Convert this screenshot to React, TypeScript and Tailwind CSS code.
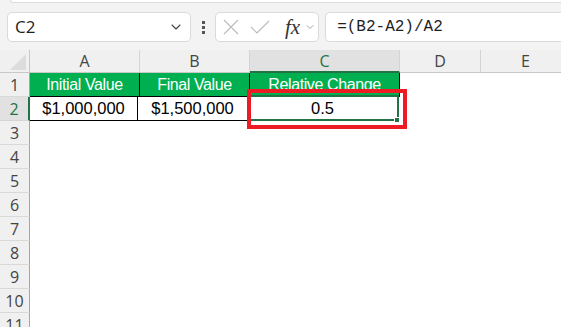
import { ChevronDown } from "lucide-react";

const cols = [
  { key: "A", w: "w-[110px]" },
  { key: "B", w: "w-[110px]" },
  { key: "C", w: "w-[150px]" },
  { key: "D", w: "w-[81px]" },
  { key: "E", w: "w-[90px]" },
];

const emptyRows = [3, 4, 5, 6, 7, 8, 9, 10, 11];

function RowHead({ n, active }: { n: number; active?: boolean }) {
  return (
    <div
      className={
        active
          ? "flex h-[24px] w-[30px] shrink-0 items-center justify-center border-b border-r-2 border-b-[#d4d4d4] border-r-[#217346] bg-[#e1e1e1] font-['Open_Sans',sans-serif] text-[16px] text-[#217346]"
          : "flex h-[24px] w-[30px] shrink-0 items-center justify-center border-b border-r border-b-[#d9d9d9] border-r-[#a6a6a6] bg-[#f0f0f0] font-['Open_Sans',sans-serif] text-[16px] text-[#444]"
      }
    >
      {n}
    </div>
  );
}

export default function App() {
  return (
    <div className="relative h-[327px] w-[561px] overflow-hidden bg-white font-['Liberation_Sans',sans-serif]">
      {/* toolbar */}
      <div className="h-[50px] bg-[#f3f3f3]">
        <div className="ml-[10px] h-[3px] rounded-bl-[4px] border-b border-l border-[#dcdcdc] bg-white" />
        <div className="flex items-center pl-[7px] pt-[9px]">
          <div className="flex h-[30px] w-[187px] items-center justify-between rounded-[5px] border border-[#dadada] bg-white pl-[7px] pr-[6px]">
            <span className="font-['Open_Sans',sans-serif] text-[17px] text-[#1f1f1f]">C2</span>
            <ChevronDown className="h-[16px] w-[16px] text-[#444]" strokeWidth={1.6} />
          </div>
          <div className="ml-[11px] flex flex-col gap-[2px]">
            <span className="h-[3px] w-[3px] bg-[#555]" />
            <span className="h-[3px] w-[3px] bg-[#555]" />
            <span className="h-[3px] w-[3px] bg-[#555]" />
          </div>
          <div className="ml-[10px] flex h-[30px] w-[106px] items-center rounded-[5px] border border-[#dadada] bg-white pl-[6px]">
            <svg width="18" height="18" viewBox="0 0 18 18" className="text-[#bdbdbd]">
              <path d="M2 2 L16 16 M16 2 L2 16" stroke="currentColor" strokeWidth="1.2" fill="none" />
            </svg>
            <svg width="20" height="18" viewBox="0 0 20 18" className="ml-[10px] text-[#bdbdbd]">
              <path d="M1 9 L7 15 L19 3" stroke="currentColor" strokeWidth="1.2" fill="none" />
            </svg>
            <span className="ml-[15px] font-['Liberation_Serif',serif] text-[21px] italic leading-none text-[#333]">fx</span>
            <ChevronDown className="ml-[4px] h-[12px] w-[12px] text-[#888]" strokeWidth={1.5} />
          </div>
          <div className="ml-[6px] flex h-[30px] w-[240px] items-center rounded-l-[5px] border border-r-0 border-[#dadada] bg-white pl-[11px]">
            <span className="font-['Liberation_Mono',monospace] text-[16px] text-[#1f1f1f]">=(B2-A2)/A2</span>
          </div>
        </div>
      </div>

      {/* column headers */}
      <div className="flex h-[23px] bg-[#f0f0f0] font-['Open_Sans',sans-serif]">
        <div className="relative w-[30px] shrink-0 border-b border-r border-[#c8c8c8]">
          <svg width="16" height="16" viewBox="0 0 16 16" className="absolute bottom-[2px] right-[3px]">
            <polygon points="16,0 16,16 0,16" fill="#dcdcdc" />
          </svg>
        </div>
        {cols.map((c) =>
          c.key === "C" ? (
            <div
              key={c.key}
              className={`${c.w} flex shrink-0 items-center justify-center border-b-2 border-r border-b-[#217346] border-r-[#d4d4d4] bg-[#e1e1e1] text-[16px] text-[#217346]`}
            >
              {c.key}
            </div>
          ) : (
            <div
              key={c.key}
              className={`${c.w} flex shrink-0 items-center justify-center border-b border-r border-b-[#c8c8c8] border-r-[#d4d4d4] text-[16px] text-[#444]`}
            >
              {c.key}
            </div>
          )
        )}
      </div>

      {/* row 1 */}
      <div className="flex">
        <RowHead n={1} />
        <div className="flex h-[24px] w-[110px] shrink-0 items-center justify-center border-b border-r border-black bg-[#00b050] text-[16px] tracking-[-0.4px] text-white">
          Initial Value
        </div>
        <div className="flex h-[24px] w-[110px] shrink-0 items-center justify-center border-b border-r border-black bg-[#00b050] text-[16px] tracking-[-0.4px] text-white">
          Final Value
        </div>
        <div className="flex h-[24px] w-[150px] shrink-0 items-center justify-center border-b border-r border-black bg-[#00b050] text-[16px] tracking-[-0.4px] text-white">
          Relative Change
        </div>
      </div>

      {/* row 2 */}
      <div className="flex">
        <RowHead n={2} active />
        <div className="flex h-[24px] w-[108px] shrink-0 items-center justify-center border-b border-r border-black text-[16.5px] text-black">
          $1,000,000
        </div>
        <div className="flex h-[24px] w-[110px] shrink-0 items-center justify-center border-b border-r border-black text-[16.5px] text-black">
          $1,500,000
        </div>
        <div className="relative flex h-[24px] w-[150px] shrink-0 items-center justify-center border-b border-r border-black text-[16.5px] text-black">
          0.5
          <div className="absolute -left-[1px] -top-[2px] h-[26px] w-[152px] border-2 border-[#217346]" />
          <div className="absolute -bottom-[3px] -right-[3px] h-[6px] w-[6px] border border-white bg-[#217346]" />
        </div>
      </div>

      {/* empty rows */}
      {emptyRows.map((n) => (
        <div key={n} className="flex">
          <RowHead n={n} />
        </div>
      ))}

      {/* annotation */}
      <div className="absolute left-[247px] top-[89px] h-[40px] w-[160px] border-4 border-[#ed1c24]" />
    </div>
  );
}
